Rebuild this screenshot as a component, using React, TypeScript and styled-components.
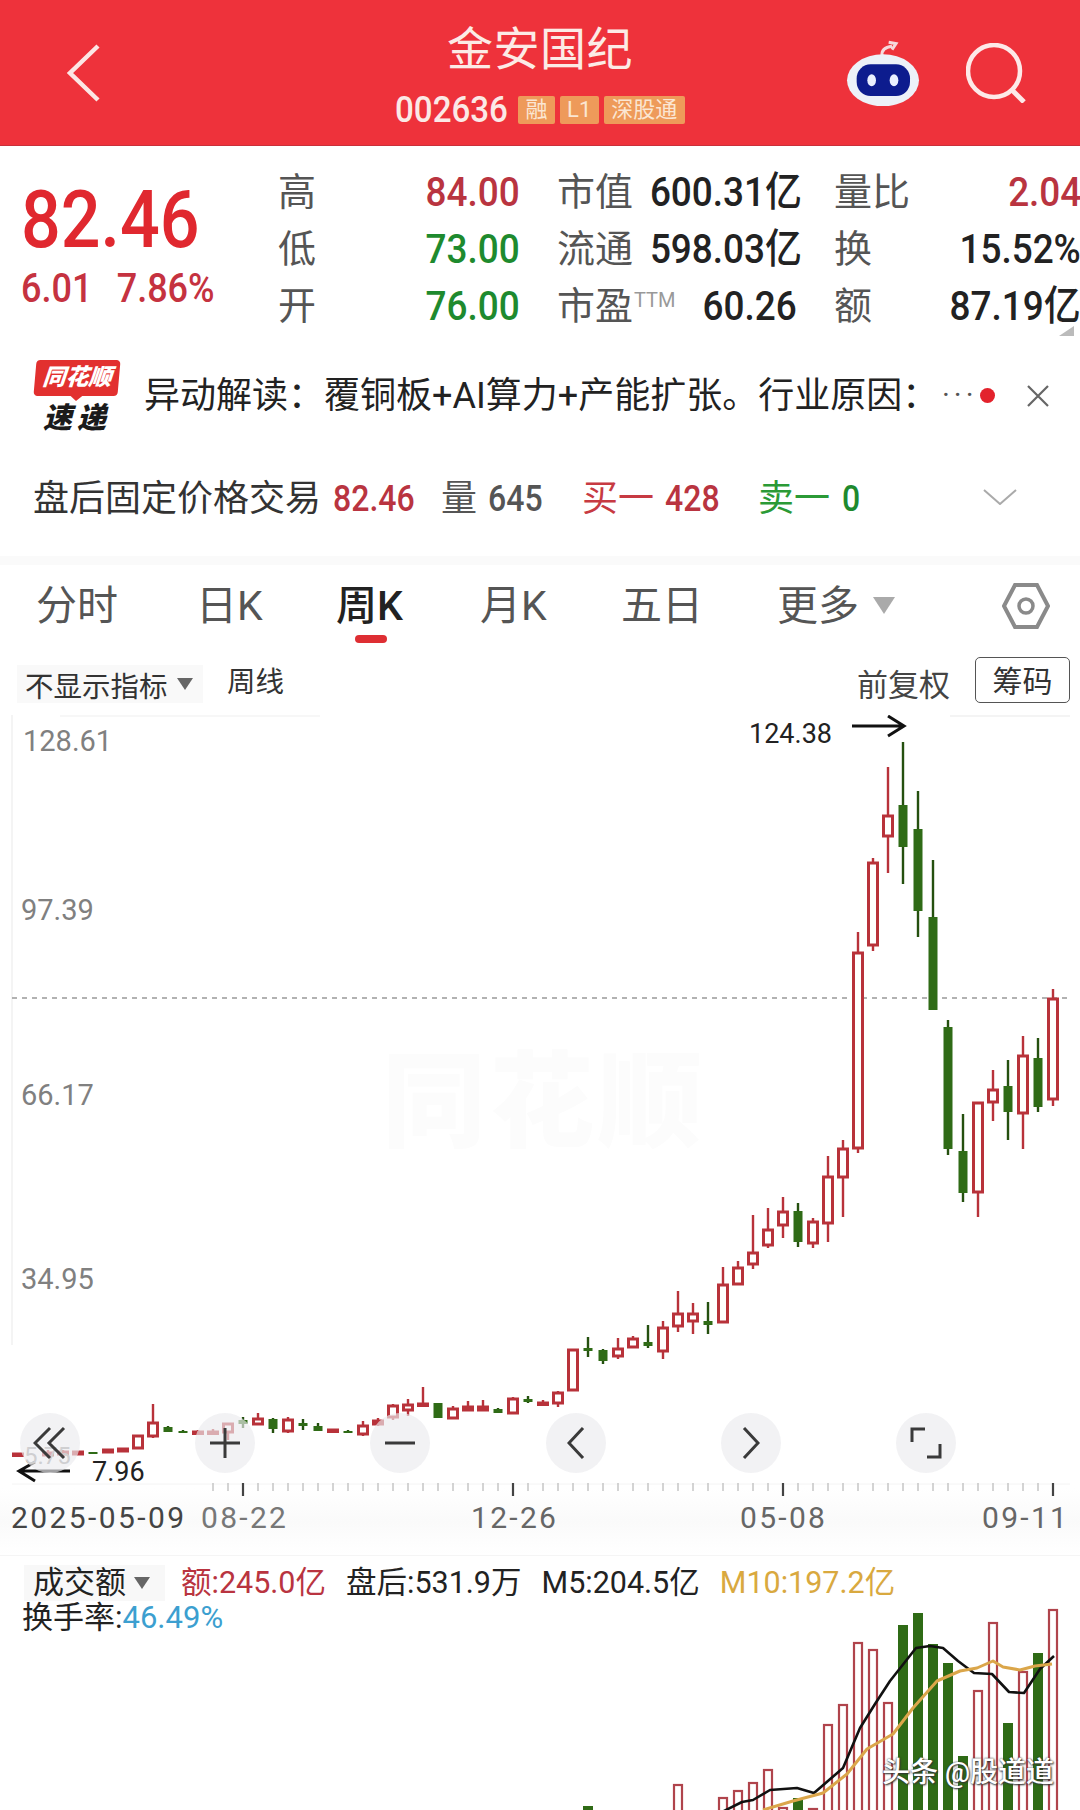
import React from 'react';
import styled, { createGlobalStyle } from 'styled-components';

const FONT = `Roboto, "Noto Sans CJK SC", sans-serif`;
const RED = '#B8323A';
const GREEN = '#2F6B16';

const Global = createGlobalStyle`
  html, body { margin: 0; padding: 0; background: #fff; }
  body { font-family: ${FONT}; color: #222; }
`;

const Page = styled.div`
  width: 1080px; height: 1810px; overflow: hidden; background: #fff; position: relative;
`;

/* ---------- header ---------- */
const Header = styled.header`
  height: 146px; background: #EE323B; display: grid; grid-template-columns: 1fr 290px 1fr;
  border-bottom: 1px solid #c9303a; box-sizing: border-box;
`;
const HeaderLeft = styled.div`display: flex; align-items: center; padding-left: 66px;`;
const HeaderCenter = styled.div`display: flex; flex-direction: column; align-items: center; padding-top: 22px;`;
const HeaderRight = styled.div`display: flex; align-items: center; justify-content: flex-end; padding-right: 54px; gap: 46px;`;
const Title = styled.div`font-size: 46px; line-height: 54px; color: #FCEBE6; letter-spacing: .5px;`;
const CodeRow = styled.div`display: flex; align-items: center; gap: 5px; margin-top: 20px; height: 28px; width: 100%;`;
const Code = styled.span`
  width: 118px; flex: none; font-size: 36px; line-height: 28px; color: #FBE9E6; font-weight: 500;
  transform: scaleX(.92); transform-origin: left center;
`;
const Tag = styled.span<{ $w: number }>`
  width: ${p => p.$w}px; height: 28px; background: #EE9A5A; color: #FBE6D2; font-size: 22px; line-height: 28px;
  text-align: center; border-radius: 2px; white-space: nowrap; overflow: hidden;
`;

/* ---------- quote ---------- */
const Quote = styled.section`height: 200px; display: flex; position: relative; box-sizing: border-box; padding-top: 18px;`;
const PriceCol = styled.div`width: 278px; flex: none; padding-left: 21px; box-sizing: border-box;`;
const Price = styled.div`
  font-size: 80px; line-height: 60px; height: 60px; margin-top: 26px; font-weight: 500; color: #E0282F;
  transform: scaleX(.875); transform-origin: left center;
`;
const Change = styled.div`
  font-size: 40px; line-height: 36px; margin-top: 21px; font-weight: 500; color: #C53240; white-space: nowrap;
  transform: scaleX(.9); transform-origin: left center; display: flex; gap: 27px;
`;
const StatGrid = styled.div`
  display: grid; grid-template-columns: 242px 240px 247px; column-gap: 37px; grid-auto-rows: 57px; flex: none;
`;
const Stat = styled.div`display: flex; justify-content: space-between; align-items: center; white-space: nowrap;`;
const StatLabel = styled.span`font-size: 38px; color: #555; line-height: 57px; sup { font-size: 20px; color: #999; vertical-align: 12px; line-height: 0; margin-left: 1px; }`;
const StatValue = styled.span<{ $c?: string }>`
  display: inline-block; font-size: 41px; line-height: 57px; font-weight: 500; color: ${p => p.$c || '#222'};
  transform: scaleX(.9); transform-origin: right center;
`;
const CornerMark = styled.i`
  position: absolute; right: 6px; top: 180px; width: 0; height: 0;
  border-left: 15px solid transparent; border-bottom: 10px solid #bbb;
`;

/* ---------- news banner ---------- */
const Banner = styled.section`height: 100px; display: flex; align-items: center; padding-left: 33px; position: relative;`;
const Logo = styled.div`width: 88px; display: flex; flex-direction: column; align-items: center; flex: none; margin-right: 24px;`;
const LogoBubble = styled.div`
  width: 84px; height: 36px; background: #E2302F; border-radius: 4px; transform: skewX(-5deg); position: relative;
  color: #fff; font-size: 23px; line-height: 36px; font-weight: 900; font-style: italic; text-align: center; white-space: nowrap;
  &::after { content: ''; position: absolute; left: 36px; top: 35px; border: 7px solid transparent; border-top: 6px solid #E2302F; border-bottom: 0; }
`;
const LogoSub = styled.div`font-size: 29px; line-height: 30px; margin-top: 7px; font-weight: 900; font-style: italic; letter-spacing: 5px; color: #1b1b1b; white-space: nowrap;`;
const BannerText = styled.div`font-size: 36px; color: #222; white-space: nowrap; flex: none; line-height: 44px; margin-left: -1px;`;
const Ellipsis = styled.span`position: absolute; left: 942px; top: 31px; font-size: 30px; letter-spacing: 4px; color: #555;`;
const RedDot = styled.i`position: absolute; left: 980px; top: 42px; width: 15px; height: 15px; border-radius: 50%; background: #E3222C;`;
const CloseBtn = styled.div`position: absolute; left: 1026px; top: 38px; display: flex;`;

/* ---------- after-hours row ---------- */
const AfterHours = styled.section`
  height: 110px; display: grid; align-items: center; padding-left: 33px; padding-bottom: 4px;
  grid-template-columns: 300px 108px 141px 176px 225px 1fr; box-sizing: border-box; white-space: nowrap;
`;
const AHCell = styled.span`display: flex; align-items: center; height: 50px;`;
const AHLabel = styled.span<{ $c?: string }>`font-size: 36px; line-height: 50px; color: ${p => p.$c || '#333'}; `;
const AHNum = styled.span<{ $c: string; $ml?: number }>`
  display: inline-block; font-size: 36px; line-height: 50px; font-weight: 500; color: ${p => p.$c}; margin-left: ${p => p.$ml ?? 0}px;
  transform: scaleX(.89); transform-origin: left center;
`;
const ChevronDown = styled.svg`margin-top: -4px;`;
const Band = styled.div`height: 9px; background: #fafafa;`;

/* ---------- tabs ---------- */
const Tabs = styled.nav`
  height: 85px; display: grid; grid-template-columns: 160px 140px 144px 141px 156px 225px 1fr; padding-left: 36px; padding-bottom: 4px; align-items: center; box-sizing: border-box;
`;
const Tab = styled.div<{ $active?: boolean }>`
  font-size: 41px; line-height: 50px; color: ${p => p.$active ? '#222' : '#555'}; font-weight: ${p => p.$active ? 500 : 400};
  position: relative; white-space: nowrap; display: flex; align-items: center; gap: 14px;
  &::after {
    content: ''; display: ${p => p.$active ? 'block' : 'none'}; position: absolute; left: 19px; top: 54px;
    width: 32px; height: 8px; border-radius: 4px; background: #DE2E33;
  }
`;
const Caret = styled.i<{ $w: number; $h: number; $c: string }>`
  width: 0; height: 0; flex: none; border-left: ${p => p.$w / 2}px solid transparent; border-right: ${p => p.$w / 2}px solid transparent;
  border-top: ${p => p.$h}px solid ${p => p.$c};
`;

/* ---------- indicator row ---------- */
const IndicatorRow = styled.div`height: 65px; display: flex; align-items: flex-start; padding: 7px 10px 0 17px; box-sizing: border-box; white-space: nowrap;`;
const Chip = styled.div`
  width: 186px; height: 38px; margin-top: 8px; background: #f9f9f9; display: flex; align-items: center; padding-left: 8px; gap: 9px; box-sizing: border-box; font-size: 28.5px; color: #333;
`;
const PlainText = styled.span`font-size: 28.5px; line-height: 38px; margin: 7px 0 0 24px; color: #333;`;
const Spacer = styled.div`flex: 1;`;
const AdjLabel = styled.span`font-size: 31px; line-height: 46px; color: #444; margin-right: 25px; margin-top: 6px;`;
const ChipBtn = styled.div`
  width: 95px; height: 46px; border: 1.5px solid #555; border-radius: 5px; box-sizing: border-box; font-size: 30px; line-height: 48px; text-align: center; color: #333;
`;

/* ---------- chart ---------- */
const Chart = styled.section`height: 840px; position: relative; background: linear-gradient(#fff 92%, #fafafa 96%, #fff);`;
const ChartSvg = styled.svg`display: block; position: absolute; left: 0; top: 0;`;
const AxisLabel = styled.span<{ $x: number; $y: number; $c?: string; $size?: number; $ls?: number }>`
  position: absolute; left: ${p => p.$x}px; top: ${p => p.$y - 715 - 20}px; line-height: 40px; white-space: nowrap;
  font-size: ${p => p.$size ?? 29}px; color: ${p => p.$c || '#808080'}; letter-spacing: ${p => p.$ls ?? 0}px;
`;
const Watermark = styled.div`
  position: absolute; left: 382px; top: 324px; font-size: 104px; line-height: 130px; font-weight: 900; color: #fcfcfc; letter-spacing: 4px;
`;
const Controls = styled.div`
  position: absolute; left: 20px; top: 698px; width: 936px; display: flex; justify-content: space-between;
`;
const RoundBtn = styled.div`
  width: 60px; height: 60px; border-radius: 50%; background: rgba(235,235,239,.66); display: flex; align-items: center; justify-content: center;
`;

/* ---------- volume ---------- */
const Volume = styled.section`height: 255px; position: relative; border-top: 1px solid #f5f5f5; box-sizing: border-box;`;
const VolSvg = styled.svg`position: absolute; left: 0; top: 0; display: block;`;
const Legend = styled.div`position: relative; display: flex; align-items: center; padding: 9px 0 0 24px; gap: 20px; white-space: nowrap; font-size: 30.5px; line-height: 36px;`;
const LegendChip = styled.div`width: 141px; height: 36px; background: #f8f8f8; display: flex; align-items: center; padding-left: 9px; gap: 8px; box-sizing: border-box; color: #222; margin-right: -4px; font-size: 31px;`;
const LegendItem = styled.span<{ $c: string }>`color: ${p => p.$c};`;
const Legend2 = styled.div`position: relative; padding-left: 22px; font-size: 31px; line-height: 36px; margin-top: -1px; color: #222; white-space: nowrap;`;
const Credit = styled.div`
  position: absolute; left: 882px; top: 199px; font-size: 28px; line-height: 36px; color: #fff; white-space: nowrap; font-weight: 500;
  text-shadow: 0 0 2px #333, 1px 1px 2px #333;
`;

/* ---------- data ---------- */
type C = [number, number, number, number, number, 'r' | 'g'];
const CANDLES: C[] = [
  [1053, 989, 1106, 998, 1100, 'r'], [1038, 1038, 1112, 1058, 1107, 'g'], [1023, 1036, 1149, 1055, 1114, 'r'],
  [1008, 1060, 1140, 1086, 1112, 'g'], [993, 1070, 1121, 1089, 1103, 'r'], [978, 1102, 1217, 1102, 1193, 'r'],
  [963, 1114, 1202, 1151, 1193, 'g'], [948, 1020, 1155, 1027, 1149, 'g'], [933, 860, 1010, 917, 1010, 'g'],
  [918, 791, 937, 829, 911, 'g'], [903, 742, 884, 805, 847, 'g'], [888, 767, 873, 815, 837, 'r'],
  [873, 858, 951, 862, 946, 'r'], [858, 932, 1153, 952, 1149, 'r'], [843, 1140, 1217, 1148, 1178, 'r'],
  [828, 1156, 1242, 1176, 1224, 'r'], [813, 1218, 1248, 1221, 1244, 'r'], [798, 1203, 1247, 1211, 1242, 'g'],
  [783, 1197, 1238, 1211, 1226, 'r'], [768, 1208, 1248, 1229, 1246, 'r'], [753, 1215, 1269, 1252, 1265, 'r'],
  [738, 1261, 1285, 1267, 1285, 'r'], [723, 1267, 1323, 1284, 1323, 'r'], [708, 1302, 1334, 1321, 1325, 'g'],
  [693, 1303, 1334, 1313, 1322, 'r'], [678, 1291, 1332, 1313, 1327, 'r'], [663, 1321, 1359, 1327, 1352, 'r'],
  [648, 1325, 1348, 1342, 1346, 'g'], [633, 1336, 1348, 1338, 1348, 'r'], [618, 1338, 1359, 1348, 1357, 'r'],
  [603, 1349, 1364, 1350, 1361, 'g'], [588, 1337, 1357, 1348, 1351, 'g'], [573, 1349, 1391, 1349, 1391, 'r'],
  [558, 1391, 1407, 1392, 1404, 'r'], [543, 1400, 1405, 1402, 1405, 'r'], [528, 1396, 1403, 1399, 1402, 'g'],
  [513, 1397, 1414, 1398, 1414, 'r'], [498, 1408, 1413, 1409, 1413, 'g'], [483, 1400, 1411, 1406, 1411, 'r'],
  [468, 1401, 1411, 1406, 1411, 'r'], [453, 1406, 1419, 1408, 1419, 'r'], [438, 1403, 1418, 1403, 1418, 'g'],
  [423, 1387, 1406, 1403, 1406, 'r'], [408, 1399, 1416, 1404, 1411, 'r'], [393, 1404, 1420, 1405, 1418, 'r'],
  [378, 1418, 1426, 1420, 1425, 'r'], [363, 1421, 1436, 1425, 1435, 'r'], [348, 1430, 1432, 1431, 1432, 'g'],
  [333, 1429, 1432, 1429, 1432, 'r'], [318, 1423, 1431, 1426, 1431, 'g'], [303, 1419, 1430, 1423, 1426, 'g'],
  [288, 1417, 1433, 1419, 1432, 'r'], [273, 1418, 1433, 1419, 1429, 'g'], [258, 1413, 1425, 1418, 1425, 'r'],
  [243, 1417, 1428, 1420, 1424, 'g'], [228, 1423, 1440, 1423, 1433, 'r'], [213, 1429, 1433, 1431, 1433, 'r'],
  [198, 1430, 1434, 1431, 1434, 'r'], [183, 1430, 1433, 1431, 1433, 'g'], [168, 1426, 1432, 1427, 1432, 'g'],
  [153, 1404, 1438, 1422, 1437, 'r'], [138, 1435, 1449, 1435, 1449, 'r'], [123, 1448, 1452, 1448, 1452, 'r'],
  [108, 1449, 1453, 1449, 1453, 'r'], [93, 1452, 1454, 1452, 1454, 'g'], [78, 1451, 1455, 1451, 1455, 'r'],
  [63, 1450, 1456, 1451, 1455, 'r'], [48, 1450, 1458, 1452, 1456, 'r'], [18, 1453, 1456, 1453, 1456, 'r'],
];

const VOL: [number, number, 'r' | 'g'][] = [
  [1053, 1608, 'r'], [1038, 1652, 'g'], [1023, 1670, 'r'], [1008, 1722, 'g'], [993, 1621, 'r'], [978, 1689, 'r'],
  [963, 1755, 'g'], [948, 1662, 'g'], [933, 1643, 'g'], [918, 1612, 'g'], [903, 1624, 'g'], [888, 1701, 'r'],
  [873, 1648, 'r'], [858, 1641, 'r'], [843, 1703, 'r'], [828, 1723, 'r'], [813, 1807, 'r'], [798, 1797, 'g'],
  [783, 1806, 'r'], [768, 1768, 'r'], [753, 1781, 'r'], [738, 1789, 'r'], [723, 1796, 'r'], [678, 1783, 'r'], [588, 1805, 'g'],
];

const BLACK_LINE = '720,1812 742,1801 753,1799 770,1789 797,1787 814,1792 843,1767 860,1727 875,1703 890,1680 916,1647 930,1645 943,1647 958,1660 974,1672 992,1673 1009,1691 1024,1692 1040,1668 1054,1655';
const GOLD_LINE = '763,1809 793,1800 823,1792 847,1773 867,1748 893,1733 913,1707 937,1680 960,1670 977,1667 993,1660 1003,1666 1020,1669 1035,1665 1052,1663';

const BIG_TICKS = [243, 513, 783, 1053];
const SMALL_TICKS = Array.from({ length: 56 }, (_, i) => 213 + i * 15).filter(x => !BIG_TICKS.includes(x));

function CandleChart() {
  return (
    <ChartSvg width={1080} height={840} viewBox="0 715 1080 840">
      <line x1="12" y1="715" x2="12" y2="1345" stroke="#f0f0f0" strokeWidth="1.5" />
      <line x1="60" y1="716" x2="320" y2="716" stroke="#f4f4f4" strokeWidth="1.5" />
      <line x1="950" y1="716" x2="1070" y2="716" stroke="#f0f0f0" strokeWidth="1.5" />
      <line x1="12" y1="998" x2="1070" y2="998" stroke="#999" strokeWidth="1.5" strokeDasharray="5 5" />
      {CANDLES.map(([x, wt, wb, bt, bb, c]) => (
        <g key={x}>
          <line x1={x} y1={wt} x2={x} y2={wb} stroke={c === 'r' ? RED : '#25500f'} strokeWidth={2.4} />
          {c === 'r'
            ? <rect x={x - 4.5} y={bt + 1} width={9} height={Math.max(bb - bt - 2, 1.5)} fill="#fff" stroke={RED} strokeWidth={3} />
            : <rect x={x - 4.5} y={bt} width={9} height={Math.max(bb - bt, 2)} fill={GREEN} />}
        </g>
      ))}
      <path d="M852 726 H902 M888 716 L904 726 L888 736" fill="none" stroke="#111" strokeWidth="3" />
      <path d="M20 1471 H70 M35 1462 L19 1471 L35 1481" fill="none" stroke="#111" strokeWidth="3" />
      <line x1="12" y1="1484" x2="1070" y2="1484" stroke="#f4f4f4" strokeWidth="1" />
      {SMALL_TICKS.map(x => <line key={x} x1={x} y1="1483" x2={x} y2="1491" stroke="#bdbdbd" strokeWidth="1.3" />)}
      {BIG_TICKS.map(x => <line key={x} x1={x} y1="1483" x2={x} y2="1496" stroke="#444" strokeWidth="2.2" />)}
    </ChartSvg>
  );
}

function VolumeChart() {
  return (
    <VolSvg width={1080} height={255} viewBox="0 1555 1080 255">
      {VOL.map(([x, top, c]) => c === 'r'
        ? <rect key={x} x={x - 4} y={top + 1} width={8} height={1815 - top} fill="#fff" stroke="#B0444C" strokeWidth={2.2} />
        : <rect key={x} x={x - 5} y={top} width={10} height={1815 - top} fill={GREEN} />)}
      <polyline points={BLACK_LINE} fill="none" stroke="#111" strokeWidth="2.6" strokeLinejoin="round" />
      <polyline points={GOLD_LINE} fill="none" stroke="#DBA64A" strokeWidth="3" strokeLinejoin="round" />
    </VolSvg>
  );
}

const stroke = { fill: 'none', stroke: '#3a3a3a', strokeWidth: 3 };

export default function App() {
  return (
    <Page>
      <Global />
      <Header>
        <HeaderLeft>
          <svg width="36" height="58" viewBox="0 0 36 58"><path d="M32 2 L4 29 L32 56" fill="none" stroke="#FCE6E4" strokeWidth="4.5" /></svg>
        </HeaderLeft>
        <HeaderCenter>
          <Title>金安国纪</Title>
          <CodeRow>
            <Code>002636</Code>
            <Tag $w={37}>融</Tag>
            <Tag $w={39}>L1</Tag>
            <Tag $w={82}>深股通</Tag>
          </CodeRow>
        </HeaderCenter>
        <HeaderRight>
          <svg width="74" height="67" viewBox="0 0 222 201">
            <path d="M108 50 C106 30 122 24 138 22 M128 10 L150 14 L138 32" fill="none" stroke="#F6D9DC" strokeWidth="9" />
            <ellipse cx="111" cy="124" rx="108" ry="78" fill="#EDF1F8" />
            <rect x="32" y="76" width="160" height="95" rx="42" fill="#0D1C8E" />
            <ellipse cx="77" cy="124" rx="13" ry="18" fill="#EAF0FF" />
            <ellipse cx="144" cy="124" rx="13" ry="18" fill="#EAF0FF" />
          </svg>
          <svg width="60" height="60" viewBox="0 0 60 60">
            <circle cx="28" cy="28" r="26" fill="none" stroke="#FDE9E8" strokeWidth="4.5" />
            <path d="M46 47 L58 59" stroke="#FDE9E8" strokeWidth="5" />
          </svg>
        </HeaderRight>
      </Header>

      <Quote>
        <PriceCol>
          <Price>82.46</Price>
          <Change><span>6.01</span><span>7.86%</span></Change>
        </PriceCol>
        <StatGrid>
          <Stat><StatLabel>高</StatLabel><StatValue $c="#B93440">84.00</StatValue></Stat>
          <Stat><StatLabel>市值</StatLabel><StatValue>600.31亿</StatValue></Stat>
          <Stat><StatLabel>量比</StatLabel><StatValue $c="#B93440">2.04</StatValue></Stat>
          <Stat><StatLabel>低</StatLabel><StatValue $c="#1E8A2E">73.00</StatValue></Stat>
          <Stat><StatLabel>流通</StatLabel><StatValue>598.03亿</StatValue></Stat>
          <Stat><StatLabel>换</StatLabel><StatValue>15.52%</StatValue></Stat>
          <Stat><StatLabel>开</StatLabel><StatValue $c="#1E8A2E">76.00</StatValue></Stat>
          <Stat><StatLabel>市盈<sup>TTM</sup></StatLabel><StatValue>60.26</StatValue></Stat>
          <Stat><StatLabel>额</StatLabel><StatValue>87.19亿</StatValue></Stat>
        </StatGrid>
        <CornerMark />
      </Quote>

      <Banner>
        <Logo>
          <LogoBubble>同花顺</LogoBubble>
          <LogoSub>速递</LogoSub>
        </Logo>
        <BannerText>异动解读：覆铜板+AI算力+产能扩张。行业原因：</BannerText>
        <Ellipsis>···</Ellipsis>
        <RedDot />
        <CloseBtn>
          <svg width="24" height="24" viewBox="0 0 24 24"><path d="M2 2 L22 22 M22 2 L2 22" stroke="#666" strokeWidth="2.2" /></svg>
        </CloseBtn>
      </Banner>

      <AfterHours>
        <AHCell><AHLabel>盘后固定价格交易</AHLabel></AHCell>
        <AHCell><AHNum $c="#B93440">82.46</AHNum></AHCell>
        <AHCell><AHLabel $c="#555">量</AHLabel><AHNum $c="#555" $ml={11}>645</AHNum></AHCell>
        <AHCell><AHLabel $c="#C73A42">买一</AHLabel><AHNum $c="#B93440" $ml={11}>428</AHNum></AHCell>
        <AHCell><AHLabel $c="#2B9A36">卖一</AHLabel><AHNum $c="#1E8A2E" $ml={12}>0</AHNum></AHCell>
        <ChevronDown width="34" height="16" viewBox="0 0 34 16"><path d="M1 1 L17 15 L33 1" fill="none" stroke="#aaa" strokeWidth="2" /></ChevronDown>
      </AfterHours>
      <Band />

      <Tabs>
        <Tab>分时</Tab>
        <Tab>日K</Tab>
        <Tab $active>周K</Tab>
        <Tab>月K</Tab>
        <Tab>五日</Tab>
        <Tab>更多<Caret $w={23} $h={17} $c="#aaa" /></Tab>
        <svg width="48" height="46" viewBox="0 0 48 46">
          <path d="M13 2 H35 L46 23 L35 44 H13 L2 23 Z" fill="none" stroke="#8a8a8a" strokeWidth="4" />
          <circle cx="24" cy="23" r="7" fill="none" stroke="#8a8a8a" strokeWidth="3.5" />
        </svg>
      </Tabs>

      <IndicatorRow>
        <Chip>不显示指标<Caret $w={17} $h={12} $c="#666" /></Chip>
        <PlainText>周线</PlainText>
        <Spacer />
        <AdjLabel>前复权</AdjLabel>
        <ChipBtn>筹码</ChipBtn>
      </IndicatorRow>

      <Chart>
        <Watermark>同花顺</Watermark>
        <CandleChart />
        <AxisLabel $x={23} $y={741}>128.61</AxisLabel>
        <AxisLabel $x={21} $y={910}>97.39</AxisLabel>
        <AxisLabel $x={21} $y={1095}>66.17</AxisLabel>
        <AxisLabel $x={21} $y={1279}>34.95</AxisLabel>
        <AxisLabel $x={24} $y={1456} $c="#999" $size={24}>5.75</AxisLabel>
        <AxisLabel $x={749} $y={734} $c="#222" $size={27}>124.38</AxisLabel>
        <AxisLabel $x={92} $y={1472} $c="#222" $size={27}>7.96</AxisLabel>
        <AxisLabel $x={11} $y={1518} $c="#444" $size={30} $ls={2.4}>2025-05-09</AxisLabel>
        <AxisLabel $x={201} $y={1518} $c="#777" $size={30} $ls={2.3}>08-22</AxisLabel>
        <AxisLabel $x={471} $y={1518} $c="#666" $size={30} $ls={2.3}>12-26</AxisLabel>
        <AxisLabel $x={740} $y={1518} $c="#666" $size={30} $ls={2.3}>05-08</AxisLabel>
        <AxisLabel $x={982} $y={1518} $c="#666" $size={30} $ls={2.3}>09-11</AxisLabel>
        <Controls>
          <RoundBtn><svg width="34" height="34" viewBox="0 0 34 34"><path d="M17 2 L2 17 L17 32 M31 2 L16 17 L31 32" {...stroke} /></svg></RoundBtn>
          <RoundBtn><svg width="30" height="30" viewBox="0 0 30 30"><path d="M0 15 H30 M15 0 V30" {...stroke} /></svg></RoundBtn>
          <RoundBtn><svg width="30" height="6" viewBox="0 0 30 6"><path d="M0 3 H30" {...stroke} /></svg></RoundBtn>
          <RoundBtn><svg width="18" height="32" viewBox="0 0 18 32"><path d="M16 1 L2 16 L16 31" {...stroke} /></svg></RoundBtn>
          <RoundBtn><svg width="18" height="32" viewBox="0 0 18 32"><path d="M2 1 L16 16 L2 31" {...stroke} /></svg></RoundBtn>
          <RoundBtn><svg width="32" height="32" viewBox="0 0 32 32"><path d="M2 15 V2 H15 M30 17 V30 H17" {...stroke} /></svg></RoundBtn>
        </Controls>
      </Chart>

      <Volume>
        <VolumeChart />
        <Legend>
          <LegendChip>成交额<Caret $w={17} $h={12} $c="#666" /></LegendChip>
          <LegendItem $c="#B93440">额:245.0亿</LegendItem>
          <LegendItem $c="#222">盘后:531.9万</LegendItem>
          <LegendItem $c="#222">M5:204.5亿</LegendItem>
          <LegendItem $c="#D9A93F">M10:197.2亿</LegendItem>
        </Legend>
        <Legend2>换手率:<LegendItem $c="#3C9FD0">46.49%</LegendItem></Legend2>
        <Credit>头条 @股道道</Credit>
      </Volume>
    </Page>
  );
}
